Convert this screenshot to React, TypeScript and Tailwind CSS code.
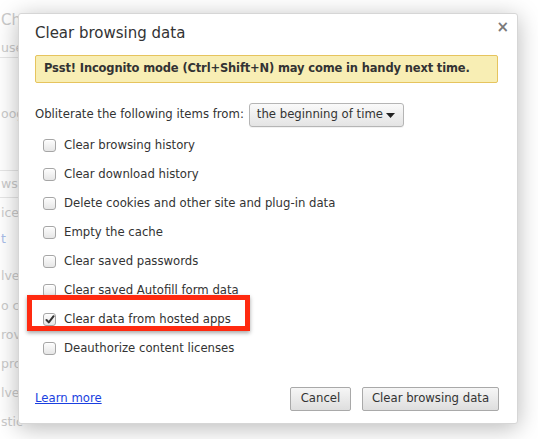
import React from 'react';

const items: { label: string; checked?: boolean }[] = [
  { label: 'Clear browsing history' },
  { label: 'Clear download history' },
  { label: 'Delete cookies and other site and plug-in data' },
  { label: 'Empty the cache' },
  { label: 'Clear saved passwords' },
  { label: 'Clear saved Autofill form data' },
  { label: 'Clear data from hosted apps', checked: true },
  { label: 'Deauthorize content licenses' },
];

// faint tails of the settings page behind the overlay
const behind = [
  { text: 'Chi', h: 'h-[40px]', cls: 'text-[15px]' },
  { text: 'use', h: 'h-[18px]', cls: 'border-b border-[#e6e6e6]' },
  { text: 'oog', h: 'h-[112px]', cls: '' },
  { text: 'wsi', h: 'h-[28px]', cls: 'border-y border-[#e6e6e6]' },
  { text: 'ices', h: 'h-[30px]', cls: '' },
  { text: 't', h: 'h-[22px]', cls: 'text-[#a9bde8]' },
  { text: 'lve', h: 'h-[42px]', cls: 'pt-[10px]' },
  { text: 'o co', h: 'h-[29px]', cls: '' },
  { text: 'rov', h: 'h-[29px]', cls: '' },
  { text: 'prov', h: 'h-[29px]', cls: '' },
  { text: 'lve', h: 'h-[29px]', cls: '' },
  { text: 'stic', h: 'h-[29px]', cls: '' },
];

function Checkbox({ checked }: { checked?: boolean }) {
  return (
    <span className="flex h-[13px] w-[13px] shrink-0 items-center justify-center rounded-[3px] border border-[#a6a6a6] bg-gradient-to-b from-[#fdfdfd] to-[#e6e6e6] shadow-[inset_0_1px_0_#fff]">
      {checked && (
        <svg width="10" height="9" viewBox="0 0 10 9">
          <path d="M1.5 5 L3.8 7.4 L8.6 1.2" fill="none" stroke="#333" strokeWidth="2" strokeLinecap="round" strokeLinejoin="round" />
        </svg>
      )}
    </span>
  );
}

export default function App() {
  return (
    <div className="relative h-[439px] w-[538px] overflow-hidden bg-white font-['Lucida_Grande','DejaVu_Sans',sans-serif] text-[11.7px] text-[#333]">
      <div className="flex flex-col text-[12.5px] text-[#cacaca]">
        {behind.map((b, i) => (
          <div key={i} className={`flex w-[170px] items-center ${b.h} ${b.cls}`}>
            <span className="whitespace-nowrap pl-[1px]">{b.text}</span>
          </div>
        ))}
        <div className="flex h-[14px] items-center whitespace-nowrap pl-[10px] text-[11px] text-[#d4d4d4]">ith     each unique traffi</div>
      </div>

      <div className="absolute left-[18px] top-[13px] flex h-[411px] w-[500px] flex-col rounded-[3px] border border-[#d6d6d6] bg-white pl-[16px] pr-[18px] shadow-[0_4px_23px_rgba(0,0,0,0.28)]">
        <button className="absolute right-[8px] top-[6px] text-[15px] font-bold leading-none text-[#7a7a7a]">×</button>
        <h1 className="mt-[10px] h-[18px] text-[15px] leading-[18px] text-[#333]">Clear browsing data</h1>

        <div className="mt-[13px] mr-[1px] flex h-[28px] items-center whitespace-nowrap rounded-[2px] border border-[#e6c45e] bg-[#f8eeb4] pl-[8px] text-[11.5px] font-bold tracking-[-0.15px] text-[#333]">
          Psst! Incognito mode (Ctrl+Shift+N) may come in handy next time.
        </div>

        <div className="mt-[20px] flex h-[24px] items-center whitespace-nowrap">
          <span>Obliterate the following items from:</span>
          <div className="ml-[5px] flex h-[24px] w-[155px] items-center justify-between rounded-[3px] border border-[#b5b5b5] bg-gradient-to-b from-[#fafafa] to-[#e4e4e4] pl-[7px] pr-[8px] text-[#333] shadow-[0_1px_0_rgba(0,0,0,0.05)]">
            <span>the beginning of time</span>
            <svg width="9" height="5" viewBox="0 0 9 5">
              <path d="M0 0 H9 L4.5 5 Z" fill="#222" />
            </svg>
          </div>
        </div>

        <div className="relative mt-[4px] flex flex-col pl-[8px]">
          {items.map((it) => (
            <label key={it.label} className="flex h-[29px] items-center gap-[8px] text-[#333]">
              <Checkbox checked={it.checked} />
              <span className="whitespace-nowrap">{it.label}</span>
            </label>
          ))}
          <div className="pointer-events-none absolute left-[-8px] top-[164px] h-[36px] w-[223px] border-[5px] border-[#ff2a10] shadow-[0_2px_4px_rgba(0,0,0,0.35)]" />
        </div>

        <div className="mt-auto mb-[12px] flex items-center justify-between">
          <a href="#" className="text-[#1a3fe0] underline">Learn more</a>
          <div className="flex gap-[11px]">
            <button className="h-[24px] w-[61px] rounded-[2px] border border-[#a9a9a9] bg-gradient-to-b from-[#f6f6f6] to-[#dedede] text-[#333]">Cancel</button>
            <button className="h-[24px] w-[137px] rounded-[2px] border border-[#a9a9a9] bg-gradient-to-b from-[#f6f6f6] to-[#dedede] text-[#333]">Clear browsing data</button>
          </div>
        </div>
      </div>
    </div>
  );
}
